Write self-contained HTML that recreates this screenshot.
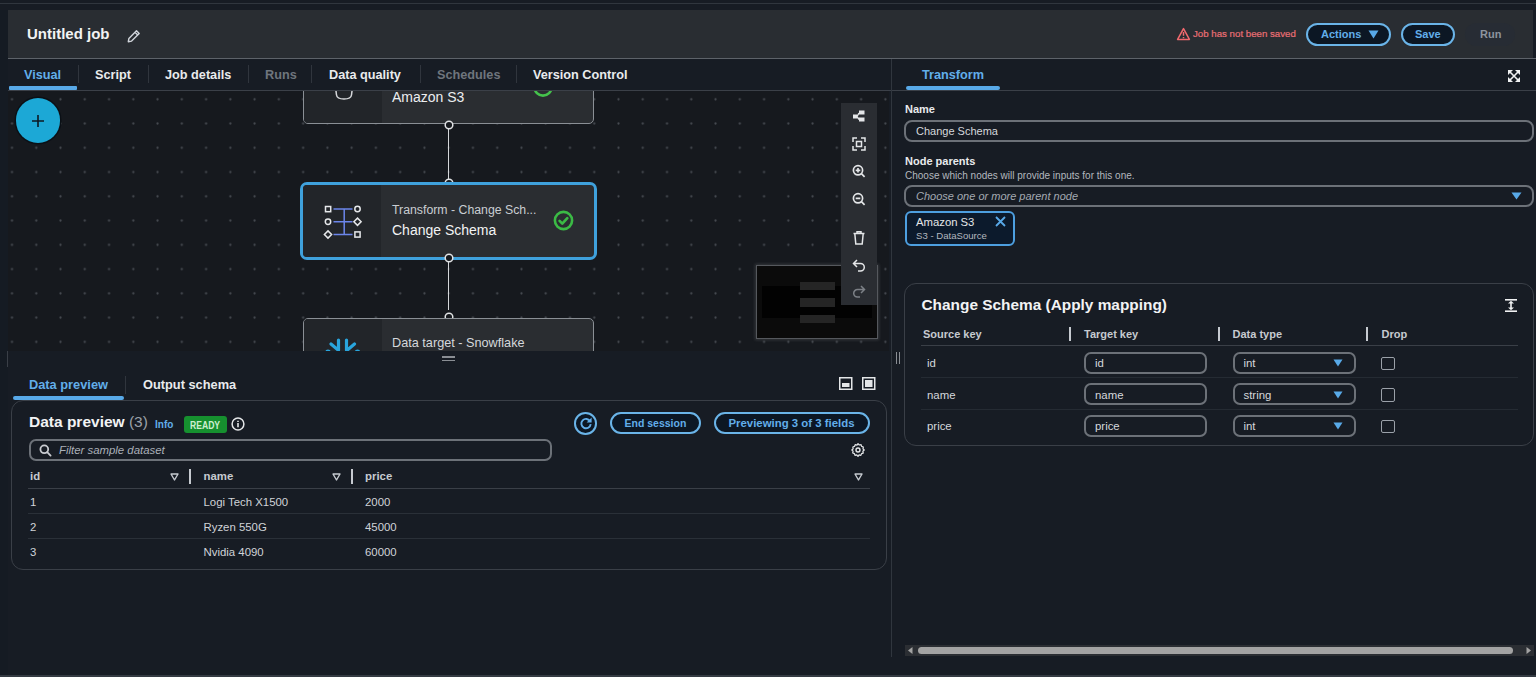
<!DOCTYPE html>
<html><head><meta charset="utf-8">
<style>
*{box-sizing:border-box;margin:0;padding:0}
html,body{width:1536px;height:677px;overflow:hidden;background:#171c24;font-family:"Liberation Sans",sans-serif;color:#d1d5db}
.a{position:absolute}
.t{position:absolute;white-space:nowrap;line-height:1}
.b{font-weight:bold}
.blue{color:#62aeea}
.btn{position:absolute;border:2px solid #6ab4e8;border-radius:13px;background:#0c1724}
</style></head><body>
<!-- top strip -->
<div class="a" style="left:0;top:3px;width:1536px;height:1px;background:#30363e"></div>
<!-- header panel -->
<div class="a" style="left:8px;top:10px;width:1525px;height:48px;background:#292d32"></div>
<div class="a" style="left:8px;top:58px;width:1528px;height:1.3px;background:#5d6269"></div>
<div class="a" style="left:0;top:10px;width:8px;height:665px;background:#151b23"></div>
<div class="t b" style="left:27px;top:26px;font-size:15px;color:#f2f3f3">Untitled job</div>
<svg class="a" style="left:127px;top:29px" width="14" height="14" viewBox="0 0 14 14"><path d="M9.5 1.8l2.7 2.7-7.6 7.6-3.3.6.6-3.3z M8 3.3l2.7 2.7" fill="none" stroke="#d1d5db" stroke-width="1.4" stroke-linejoin="round"/></svg>

<!-- warning -->
<svg class="a" style="left:1176px;top:27px" width="15" height="14" viewBox="0 0 15 14"><path d="M7.5 1.6L13.4 12.4H1.6z" fill="none" stroke="#f0696e" stroke-width="1.5" stroke-linejoin="round"/><path d="M7.5 5v3.8M7.5 10v1.3" stroke="#f0696e" stroke-width="1.5"/></svg>
<div class="t" style="left:1193px;top:29px;font-size:9.7px;color:#ea6f75;-webkit-text-stroke:0.2px #ea6f75">Job has not been saved</div>
<div class="btn" style="left:1306px;top:23px;width:85px;height:23px"></div>
<div class="t b blue" style="left:1321px;top:29px;font-size:11px">Actions</div>
<svg class="a" style="left:1368px;top:30px" width="11" height="9" viewBox="0 0 11 9"><path d="M0.5 0.5h10L5.5 8.5z" fill="#58a9e8"/></svg>
<div class="btn" style="left:1401px;top:23px;width:54px;height:23px"></div>
<div class="t b blue" style="left:1415px;top:29px;font-size:11px">Save</div>
<div class="a" style="left:1465px;top:23px;width:50px;height:23px;border-radius:12px;background:#272c34"></div>
<div class="t b" style="left:1480px;top:29px;font-size:11px;color:#8d949e">Run</div>

<!-- tabs row -->
<div class="a" style="left:8px;top:90px;width:1528px;height:1px;background:#3b4048"></div>
<div class="t b blue" style="left:24px;top:69px;font-size:12.7px">Visual</div>
<div class="a" style="left:9px;top:86px;width:68px;height:4px;background:#58a9e8;border-radius:1px"></div>
<div class="a" style="left:78px;top:65px;width:1px;height:18px;background:#30353d"></div>
<div class="t b" style="left:95px;top:69px;font-size:12.7px;color:#e9ebed">Script</div>
<div class="a" style="left:148px;top:65px;width:1px;height:18px;background:#30353d"></div>
<div class="t b" style="left:165px;top:69px;font-size:12.7px;color:#e9ebed">Job details</div>
<div class="a" style="left:248px;top:65px;width:1px;height:18px;background:#30353d"></div>
<div class="t b" style="left:265px;top:69px;font-size:12.7px;color:#6f757d">Runs</div>
<div class="a" style="left:311px;top:65px;width:1px;height:18px;background:#30353d"></div>
<div class="t b" style="left:329px;top:69px;font-size:12.7px;color:#e9ebed">Data quality</div>
<div class="a" style="left:420px;top:65px;width:1px;height:18px;background:#30353d"></div>
<div class="t b" style="left:437px;top:69px;font-size:12.7px;color:#6f757d">Schedules</div>
<div class="a" style="left:516px;top:65px;width:1px;height:18px;background:#30353d"></div>
<div class="t b" style="left:533px;top:69px;font-size:12.7px;color:#e9ebed">Version Control</div>

<!-- vertical divider -->
<div class="a" style="left:890.5px;top:59px;width:1.2px;height:598px;background:#30363e"></div>

<!-- CANVAS -->
<div id="canvas" class="a" style="left:8px;top:91px;width:881px;height:260px;background:#16191e;overflow:hidden">
<svg class="a" style="left:0;top:0" width="881" height="260">
<defs><pattern id="dots" x="-8.13" y="-3.83" width="24.26" height="24.26" patternUnits="userSpaceOnUse"><circle cx="12.13" cy="12.13" r="1.1" fill="#474b52"/></pattern></defs>
<rect width="881" height="260" fill="url(#dots)"/>
</svg>

<!-- connectors -->
<div class="a" style="left:439.5px;top:37px;width:1.5px;height:52px;background:#d5d7da"></div>
<div class="a" style="left:439.5px;top:171px;width:1.5px;height:48px;background:#d5d7da"></div>
<!-- S3 node -->
<div class="a" style="left:295px;top:-40px;width:291px;height:73px;border:1.3px solid #8a8f95;border-radius:5px;background:#2a2d31;overflow:hidden">
  <div class="a" style="left:0;top:0;width:78px;height:100%;background:#222529"></div>
</div>
<svg class="a" style="left:325px;top:-8px" width="22" height="18" viewBox="0 0 22 18"><path d="M2 0 L3.5 12 Q4 16 11 16 Q18 16 18.5 12 L20 0" fill="none" stroke="#d5d7da" stroke-width="1.5"/></svg>
<div class="t" style="left:384px;top:-1px;font-size:14px;color:#eceef0">Amazon S3</div>
<svg class="a" style="left:524px;top:-15px" width="22" height="22" viewBox="0 0 22 22"><circle cx="11" cy="11" r="8.6" fill="none" stroke="#45c24c" stroke-width="2.6"/></svg>
<svg class="a" style="left:435.5px;top:28.5px" width="10" height="10" viewBox="0 0 10 10"><circle cx="5" cy="5" r="3.8" fill="#16191e" stroke="#e1e3e5" stroke-width="1.5"/></svg>
<svg class="a" style="left:435.5px;top:86.5px" width="10" height="10" viewBox="0 0 10 10"><circle cx="5" cy="5" r="3.8" fill="#16191e" stroke="#e1e3e5" stroke-width="1.5"/></svg>
<!-- Change schema node -->
<div class="a" style="left:292px;top:90.5px;width:297px;height:78px;border:3px solid #3fa1dc;border-radius:7px;background:#2a2d31;overflow:hidden">
  <div class="a" style="left:0;top:0;width:78px;height:100%;background:#222529"></div>
</div>
<svg class="a" style="left:312px;top:109px" width="46" height="44" viewBox="0 0 46 44">
 <g stroke="#6c86ea" stroke-width="1.5" fill="none"><path d="M13.5 9H32.5M13.5 21.75H32.5M13.5 34.5H32.5M24.2 9V34.5"/></g>
 <g stroke="#e6e8ea" stroke-width="1.5" fill="none">
  <rect x="5.5" y="6.5" width="5.2" height="5.2"/>
  <circle cx="8" cy="21.75" r="2.7"/>
  <path d="M8 30.9l3.6 3.6L8 38.1 4.4 34.5z"/>
  <circle cx="37.5" cy="9" r="2.7"/>
  <path d="M37.5 18.15l3.6 3.6-3.6 3.6-3.6-3.6z"/>
  <rect x="34.9" y="31.9" width="5.2" height="5.2"/>
 </g>
</svg>
<div class="t" style="left:384px;top:113px;font-size:12.3px;color:#c9cdd2">Transform - Change Sch...</div>
<div class="t" style="left:384px;top:132px;font-size:14px;color:#f2f3f4">Change Schema</div>
<svg class="a" style="left:544px;top:118px" width="23" height="23" viewBox="0 0 23 23"><circle cx="11.5" cy="11.5" r="8.6" fill="none" stroke="#3bba45" stroke-width="2.6"/><path d="M7.6 11.9l2.7 2.7 5-5.4" fill="none" stroke="#3bba45" stroke-width="2.7" stroke-linecap="round" stroke-linejoin="round"/></svg>
<svg class="a" style="left:435.5px;top:161.5px" width="10" height="10" viewBox="0 0 10 10"><circle cx="5" cy="5" r="3.8" fill="#16191e" stroke="#e1e3e5" stroke-width="1.5"/></svg>
<svg class="a" style="left:435.5px;top:220.5px" width="10" height="10" viewBox="0 0 10 10"><circle cx="5" cy="5" r="3.8" fill="#16191e" stroke="#e1e3e5" stroke-width="1.5"/></svg>
<!-- Snowflake node -->
<div class="a" style="left:295px;top:226.5px;width:291px;height:73px;border:1.3px solid #8a8f95;border-radius:5px;background:#2a2d31;overflow:hidden">
  <div class="a" style="left:0;top:0;width:78px;height:100%;background:#222529"></div>
</div>
<svg class="a" style="left:316px;top:244px" width="40" height="20" viewBox="0 0 40 20"><g fill="none" stroke="#29a5dd" stroke-width="3.2" stroke-linecap="round" stroke-linejoin="round"><path d="M7 9l6.5 5.5M14.5 5v10"/><path d="M30.5 9L24 14.5M22.5 5v10"/></g><g fill="#29a5dd"><ellipse cx="4" cy="16" rx="2.5" ry="1.5"/><ellipse cx="33.5" cy="16" rx="2.5" ry="1.5"/></g></svg>
<div class="t" style="left:384px;top:246px;font-size:12.7px;color:#d5d8dc">Data target - Snowflake</div>
<!-- FAB -->
<div class="a" style="left:7.7px;top:7.3px;width:44.6px;height:44.6px;border-radius:50%;background:#1ca8d6;box-shadow:0 0 0 1.5px #0b1016"></div>
<svg class="a" style="left:23px;top:23px" width="14" height="14" viewBox="0 0 14 14"><path d="M7 1v12M1 7h12" stroke="#0d1a24" stroke-width="1.6"/></svg>
<!-- toolbar -->
<div class="a" style="left:833px;top:12px;width:36px;height:202px;background:#2a2d32"></div>
<!-- minimap -->
<div class="a" style="left:748px;top:174px;width:122px;height:74px;background:#0b0b0b;border:1px solid #55585d;box-shadow:0 0 3px 1px rgba(200,200,200,0.18)"></div>
<div class="a" style="left:754px;top:195px;width:110px;height:32px;background:#020202"></div>
<div class="a" style="left:791.5px;top:190.8px;width:35px;height:8.2px;background:#252525"></div>
<div class="a" style="left:791.5px;top:206.9px;width:35px;height:8.7px;background:#252525"></div>
<div class="a" style="left:791.5px;top:223.6px;width:35px;height:8.4px;background:#252525"></div>
<div class="a" style="left:833px;top:160px;width:36px;height:54px;background:#2a2d32"></div>
<!-- toolbar icons -->
<svg class="a" style="left:842px;top:17px" width="18" height="200" viewBox="0 0 18 200" fill="none" stroke="#e4e6e8" stroke-width="1.5">
 <g transform="translate(0,0)"><path d="M9 2.5H14.5V6.5H9z M9 9.5H14.5V13.5H9z M3 6.5H7V10.5H3z" fill="#e4e6e8" stroke="none"/><path d="M7 8.5L9 5M7 8.5L9 11.5" stroke-width="1.4"/></g>
 <g transform="translate(0,27)"><path d="M3 7V3h4M11 3h4v4M15 11v4h-4M7 15H3v-4"/><rect x="6.5" y="6.5" width="5" height="5"/></g>
 <g transform="translate(0,54)" stroke-width="1.7"><circle cx="8" cy="8.3" r="4.6"/><path d="M11.4 11.7l3.2 3.2M8 6v4.6M5.7 8.3h4.6"/></g>
 <g transform="translate(0,82)" stroke-width="1.7"><circle cx="8" cy="8.3" r="4.6"/><path d="M11.4 11.7l3.2 3.2M5.7 8.3h4.6"/></g>
 <g transform="translate(0,121)"><path d="M3.5 4.5h11M7 4.5V2.8h4v1.7M4.8 4.5l1 10.5h6.4l1-10.5"/></g>
 <g transform="translate(0,149)"><path d="M7 3L3.5 6.5 7 10M3.8 6.5H10.5a3.8 3.8 0 0 1 0 7.6H8"/></g>
 <g transform="translate(0,175)" stroke="#7c8086"><path d="M11 3l3.5 3.5L11 10M14.2 6.5H7.5a3.8 3.8 0 0 0 0 7.6H10"/></g>
</svg>
</div>

<!-- BOTTOM PANEL -->
<div class="a" style="left:7px;top:351px;width:1px;height:16px;background:#3a3f47"></div>
<div class="a" style="left:442px;top:356px;width:13px;height:1.5px;background:#8a8e94"></div>
<div class="a" style="left:442px;top:359.5px;width:13px;height:1.5px;background:#8a8e94"></div>
<div class="t b blue" style="left:29px;top:379px;font-size:12.8px">Data preview</div>
<div class="a" style="left:13px;top:396px;width:111px;height:4px;background:#58a9e8;border-radius:2px"></div>
<div class="a" style="left:125px;top:376px;width:1px;height:18px;background:#30353d"></div>
<div class="t b" style="left:143px;top:379px;font-size:12.8px;color:#e9ebed">Output schema</div>
<svg class="a" style="left:839px;top:377px" width="37" height="13" viewBox="0 0 37 13"><rect x="0.75" y="0.75" width="12" height="11.5" fill="none" stroke="#e4e6e8" stroke-width="1.5"/><rect x="3" y="6" width="7.5" height="4" fill="#e4e6e8"/><rect x="23.75" y="0.75" width="12" height="11.5" fill="none" stroke="#e4e6e8" stroke-width="1.5"/><rect x="26" y="3" width="7.5" height="7" fill="#e4e6e8"/></svg>
<div class="a" style="left:11px;top:400px;width:876px;height:170px;border:1px solid #3a3f47;border-radius:12px"></div>
<div class="t b" style="left:29px;top:414px;font-size:15.5px;color:#f2f3f4">Data preview <span style="font-weight:normal;color:#9ba1a9">(3)</span></div>
<div class="t b blue" style="left:155px;top:420px;font-size:10px">Info</div>
<div class="a" style="left:184px;top:416px;width:42.5px;height:16.5px;background:#16902f;border-radius:3px"></div>
<div class="t b" style="left:189.5px;top:420.5px;font-size:10px;color:#cdeecf;transform:scaleX(0.86);transform-origin:0 0">READY</div>
<svg class="a" style="left:231px;top:417px" width="14" height="14" viewBox="0 0 14 14"><circle cx="7" cy="7" r="5.9" fill="none" stroke="#e4e6e8" stroke-width="1.5"/><path d="M7 6v4.3M7 3.7v1.3" stroke="#e4e6e8" stroke-width="1.6"/></svg>
<div class="a" style="left:574px;top:412px;width:23px;height:22.5px;border:2px solid #6ab4e8;border-radius:50%;background:#0c1724"></div>
<svg class="a" style="left:578.5px;top:416.3px" width="14" height="14" viewBox="0 0 14 14"><path d="M11.2 5.4A4.7 4.7 0 1 0 11.7 8.2" fill="none" stroke="#62aeea" stroke-width="1.9"/><path d="M12.6 1.6v5H7.6z" fill="#62aeea"/></svg>
<div class="btn" style="left:610px;top:412px;width:91px;height:22px;border-radius:11px"></div>
<div class="t b blue" style="left:624.5px;top:418px;font-size:10.5px">End session</div>
<div class="btn" style="left:714px;top:412px;width:155.5px;height:22px;border-radius:11px"></div>
<div class="t b blue" style="left:728.5px;top:418px;font-size:11.4px">Previewing 3 of 3 fields</div>
<div class="a" style="left:29px;top:438.5px;width:522.5px;height:22px;border:2px solid #6c7178;border-radius:7px"></div>
<svg class="a" style="left:38.5px;top:443.5px" width="13" height="13" viewBox="0 0 13 13"><circle cx="5.3" cy="5.3" r="3.9" fill="none" stroke="#c9ccd1" stroke-width="1.8"/><path d="M8.2 8.2l3.4 3.4" stroke="#c9ccd1" stroke-width="1.8" stroke-linecap="round"/></svg>
<div class="t" style="left:59px;top:445px;font-size:11.4px;color:#aab0b8;font-style:italic">Filter sample dataset</div>
<svg class="a" style="left:851px;top:443px" width="14" height="14" viewBox="0 0 14 14"><circle cx="7" cy="7" r="2" fill="none" stroke="#e4e6e8" stroke-width="1.4"/><path d="M7 1.3l1.3 1.4 1.9-.4.6 1.8 1.8.7-.4 1.9L13.5 8l-1.4 1.3.4 1.9-1.8.6-.7 1.8-1.9-.4L7 14.6 5.7 13.2l-1.9.4-.6-1.8-1.8-.7.4-1.9L.5 8l1.4-1.3-.4-1.9 1.8-.6.7-1.8 1.9.4z" transform="scale(0.95) translate(0.4,-0.6)" fill="none" stroke="#e4e6e8" stroke-width="1.3" stroke-linejoin="round"/></svg>
<!-- table -->
<div class="t b" style="left:30px;top:471px;font-size:11.4px;color:#c6cad0">id</div>
<svg class="a" style="left:169.5px;top:473px" width="9" height="8" viewBox="0 0 9 8"><path d="M1 1h7L4.5 7z" fill="none" stroke="#c6cad0" stroke-width="1.4" stroke-linejoin="round"/></svg>
<div class="a" style="left:189px;top:469px;width:2px;height:14.5px;background:#c6cad0"></div>
<div class="t b" style="left:203.5px;top:471px;font-size:11.4px;color:#c6cad0">name</div>
<svg class="a" style="left:331.5px;top:473px" width="9" height="8" viewBox="0 0 9 8"><path d="M1 1h7L4.5 7z" fill="none" stroke="#c6cad0" stroke-width="1.4" stroke-linejoin="round"/></svg>
<div class="a" style="left:350.5px;top:469px;width:2px;height:14.5px;background:#c6cad0"></div>
<div class="t b" style="left:365px;top:471px;font-size:11.4px;color:#c6cad0">price</div>
<svg class="a" style="left:854px;top:473px" width="9" height="8" viewBox="0 0 9 8"><path d="M1 1h7L4.5 7z" fill="none" stroke="#c6cad0" stroke-width="1.4" stroke-linejoin="round"/></svg>
<div class="a" style="left:28px;top:487.5px;width:842px;height:1px;background:#3a3f47"></div>
<div class="a" style="left:28px;top:513px;width:842px;height:1px;background:#2a3038"></div>
<div class="a" style="left:28px;top:538px;width:842px;height:1px;background:#2a3038"></div>
<div class="t" style="left:30px;top:497px;font-size:11.4px;color:#d0d3d8">1</div>
<div class="t" style="left:203.5px;top:497px;font-size:11.4px;color:#d0d3d8">Logi Tech X1500</div>
<div class="t" style="left:365px;top:497px;font-size:11.4px;color:#d0d3d8">2000</div>
<div class="t" style="left:30px;top:522px;font-size:11.4px;color:#d0d3d8">2</div>
<div class="t" style="left:203.5px;top:522px;font-size:11.4px;color:#d0d3d8">Ryzen 550G</div>
<div class="t" style="left:365px;top:522px;font-size:11.4px;color:#d0d3d8">45000</div>
<div class="t" style="left:30px;top:547px;font-size:11.4px;color:#d0d3d8">3</div>
<div class="t" style="left:203.5px;top:547px;font-size:11.4px;color:#d0d3d8">Nvidia 4090</div>
<div class="t" style="left:365px;top:547px;font-size:11.4px;color:#d0d3d8">60000</div>
<div class="a" style="left:0;top:675px;width:1536px;height:2px;background:#343a42"></div>

<!-- RIGHT PANEL -->
<div class="t b blue" style="left:922px;top:69px;font-size:12.7px">Transform</div>
<div class="a" style="left:906px;top:86px;width:94px;height:4px;background:#58a9e8;border-radius:2px"></div>
<svg class="a" style="left:1508px;top:70px" width="12" height="12" viewBox="0 0 12 12"><g stroke="#f0f1f2" stroke-width="1.6" fill="none"><path d="M1.5 1.5l9 9M10.5 1.5l-9 9"/></g><g fill="#f0f1f2"><path d="M0 0h5L0 5z"/><path d="M12 0v5L7 0z"/><path d="M0 12V7l5 5z"/><path d="M12 12H7l5-5z"/></g></svg>
<div class="t b" style="left:905px;top:104px;font-size:11px;color:#e9ebed">Name</div>
<div class="a" style="left:904px;top:120px;width:630px;height:22px;border:2px solid #6c7178;border-radius:8px"></div>
<div class="t" style="left:916px;top:126px;font-size:11px;color:#d5d8dc">Change Schema</div>
<div class="t b" style="left:905px;top:156px;font-size:11px;color:#e9ebed">Node parents</div>
<div class="t" style="left:905px;top:171px;font-size:10px;color:#b3b8bf">Choose which nodes will provide inputs for this one.</div>
<div class="a" style="left:904px;top:185px;width:630px;height:22px;border:2px solid #6c7178;border-radius:8px"></div>
<div class="t" style="left:916px;top:191px;font-size:11px;color:#a4aab2;font-style:italic">Choose one or more parent node</div>
<svg class="a" style="left:1511px;top:192px" width="11" height="8" viewBox="0 0 11 8"><path d="M0.5 0.5h10L5.5 7.5z" fill="#58a9e8"/></svg>
<div class="a" style="left:904.5px;top:210.5px;width:110.5px;height:35px;border:2px solid #4d9fe0;border-radius:6px;background:#0c1a2c"></div>
<div class="t" style="left:916px;top:217px;font-size:11.3px;color:#e4e6e8">Amazon S3</div>
<div class="t" style="left:916px;top:231px;font-size:9.6px;color:#b3b8bf">S3 - DataSource</div>
<svg class="a" style="left:995px;top:216px" width="11" height="11" viewBox="0 0 11 11"><path d="M1 1l9 9M10 1l-9 9" stroke="#58a9e8" stroke-width="1.8"/></svg>

<div class="a" style="left:904px;top:282.5px;width:630px;height:163.5px;border:1px solid #3a3f47;border-radius:12px"></div>
<div class="t b" style="left:921.5px;top:297.3px;font-size:15.4px;color:#f2f3f4">Change Schema (Apply mapping)</div>
<svg class="a" style="left:1505px;top:299px" width="12" height="13" viewBox="0 0 12 13"><g fill="#f0f1f2"><rect x="0" y="0" width="12" height="1.6"/><rect x="0" y="11.4" width="12" height="1.6"/><rect x="5.2" y="3" width="1.6" height="7"/><path d="M3 4.5h6L6 1.8z"/><path d="M3 8.5h6L6 11.2z"/></g></svg>
<div class="t b" style="left:923px;top:329.3px;font-size:11px;color:#c6cad0">Source key</div>
<div class="a" style="left:1068.5px;top:327px;width:2px;height:14px;background:#c6cad0"></div>
<div class="t b" style="left:1084px;top:329.3px;font-size:11px;color:#c6cad0">Target key</div>
<div class="a" style="left:1217.5px;top:327px;width:2px;height:14px;background:#c6cad0"></div>
<div class="t b" style="left:1232.5px;top:329.3px;font-size:11px;color:#c6cad0">Data type</div>
<div class="a" style="left:1366px;top:327px;width:2px;height:14px;background:#c6cad0"></div>
<div class="t b" style="left:1381.5px;top:329.3px;font-size:11px;color:#c6cad0">Drop</div>
<div class="a" style="left:921px;top:344.5px;width:597px;height:1px;background:#3a3f47"></div>
<div class="a" style="left:921px;top:377px;width:597px;height:1px;background:#252b33"></div>
<div class="a" style="left:921px;top:408.5px;width:597px;height:1px;background:#252b33"></div>
<div class="t" style="left:927px;top:358.2px;font-size:11.4px;color:#d5d8dc">id</div>
<div class="a" style="left:1084px;top:351.7px;width:123px;height:22px;border:2px solid #6c7178;border-radius:7px"></div>
<div class="t" style="left:1095px;top:358.2px;font-size:11.4px;color:#d5d8dc">id</div>
<div class="a" style="left:1232.5px;top:351.7px;width:123px;height:22px;border:2px solid #6c7178;border-radius:7px"></div>
<div class="t" style="left:1243.5px;top:358.2px;font-size:11.4px;color:#d5d8dc">int</div>
<svg class="a" style="left:1333px;top:359.2px" width="10" height="8" viewBox="0 0 10 8"><path d="M0.5 0.5h9L5 7.5z" fill="#58a9e8"/></svg>
<div class="a" style="left:1381px;top:356.7px;width:13.5px;height:13.5px;border:1.5px solid #9ba1a9;border-radius:2px"></div>
<div class="t" style="left:927px;top:389.8px;font-size:11.4px;color:#d5d8dc">name</div>
<div class="a" style="left:1084px;top:383.3px;width:123px;height:22px;border:2px solid #6c7178;border-radius:7px"></div>
<div class="t" style="left:1095px;top:389.8px;font-size:11.4px;color:#d5d8dc">name</div>
<div class="a" style="left:1232.5px;top:383.3px;width:123px;height:22px;border:2px solid #6c7178;border-radius:7px"></div>
<div class="t" style="left:1243.5px;top:389.8px;font-size:11.4px;color:#d5d8dc">string</div>
<svg class="a" style="left:1333px;top:390.8px" width="10" height="8" viewBox="0 0 10 8"><path d="M0.5 0.5h9L5 7.5z" fill="#58a9e8"/></svg>
<div class="a" style="left:1381px;top:388.3px;width:13.5px;height:13.5px;border:1.5px solid #9ba1a9;border-radius:2px"></div>
<div class="t" style="left:927px;top:421.1px;font-size:11.4px;color:#d5d8dc">price</div>
<div class="a" style="left:1084px;top:414.6px;width:123px;height:22px;border:2px solid #6c7178;border-radius:7px"></div>
<div class="t" style="left:1095px;top:421.1px;font-size:11.4px;color:#d5d8dc">price</div>
<div class="a" style="left:1232.5px;top:414.6px;width:123px;height:22px;border:2px solid #6c7178;border-radius:7px"></div>
<div class="t" style="left:1243.5px;top:421.1px;font-size:11.4px;color:#d5d8dc">int</div>
<svg class="a" style="left:1333px;top:422.1px" width="10" height="8" viewBox="0 0 10 8"><path d="M0.5 0.5h9L5 7.5z" fill="#58a9e8"/></svg>
<div class="a" style="left:1381px;top:419.6px;width:13.5px;height:13.5px;border:1.5px solid #9ba1a9;border-radius:2px"></div>

<!-- scrollbar -->
<div class="a" style="left:905px;top:645px;width:629px;height:11px;background:#2b2e33"></div>
<div class="a" style="left:918px;top:647px;width:595px;height:7px;background:#a3a3a3;border-radius:4px"></div>
<svg class="a" style="left:906px;top:646px" width="9" height="9" viewBox="0 0 9 9"><path d="M6.5 1v7L2 4.5z" fill="#a3a3a3"/></svg>
<svg class="a" style="left:1524px;top:646px" width="9" height="9" viewBox="0 0 9 9"><path d="M2.5 1v7L7 4.5z" fill="#a3a3a3"/></svg>
<div class="a" style="left:896px;top:352px;width:1.3px;height:12px;background:#8a8e94"></div>
<div class="a" style="left:899px;top:352px;width:1.3px;height:12px;background:#8a8e94"></div>
</body></html>
